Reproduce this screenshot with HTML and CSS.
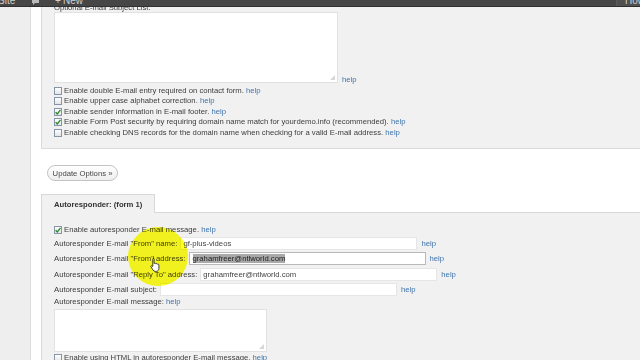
FILE: index.html
```html
<!DOCTYPE html>
<html>
<head>
<meta charset="utf-8">
<link rel="stylesheet" href="styles.css">
</head>
<body>
<div class="adminbar">
  <div class="ab-items">
    <span class="ab-item site">Site</span>
    <span class="ab-item ab-icon">
      <svg width="9" height="9" viewBox="0 0 9 9"><path d="M1 1h7v5H4L2 8V6H1z" fill="#bbb"/></svg>
    </span>
    <span class="ab-item plus">+</span>
    <span class="ab-item new">New</span>
    <span class="ab-spacer"></span>
    <span class="ab-item howdy">Howdy</span>
  </div>
</div>

<div class="layout">
  <div class="sidebar"></div>
  <div class="main">
    <div class="panel panel-top">
      <div class="label">Optional E-mail Subject List:</div>
      <div class="ta-row">
        <div class="textarea ta-big"><span class="grip"></span></div>
        <a class="help">help</a>
      </div>
      <div class="checks">
        <div class="check-row"><span class="cb"></span>Enable double E-mail entry required on contact form. <a class="help">help</a></div>
        <div class="check-row"><span class="cb"></span>Enable upper case alphabet correction. <a class="help">help</a></div>
        <div class="check-row"><span class="cb checked"><svg width="6" height="6" viewBox="0 0 6 6"><path d="M0.6 3.2L2.3 5 5.5 0.8" fill="none" stroke="#2a8a2a" stroke-width="1.3"/></svg></span>Enable sender information in E-mail footer. <a class="help">help</a></div>
        <div class="check-row"><span class="cb checked"><svg width="6" height="6" viewBox="0 0 6 6"><path d="M0.6 3.2L2.3 5 5.5 0.8" fill="none" stroke="#2a8a2a" stroke-width="1.3"/></svg></span>Enable Form Post security by requiring domain name match for yourdemo.info (recommended). <a class="help">help</a></div>
        <div class="check-row"><span class="cb"></span>Enable checking DNS records for the domain name when checking for a valid E-mail address. <a class="help">help</a></div>
      </div>
    </div>

    <div class="actions"><span class="btn">Update Options »</span></div>

    <div class="tabs"><div class="tab">Autoresponder: (form 1)</div></div>

    <div class="panel panel-bottom">
      <div class="check-row"><span class="cb checked"><svg width="6" height="6" viewBox="0 0 6 6"><path d="M0.6 3.2L2.3 5 5.5 0.8" fill="none" stroke="#2a8a2a" stroke-width="1.3"/></svg></span>Enable autoresponder E-mail message. <a class="help">help</a></div>
      <div class="field-row"><span class="flabel">Autoresponder E-mail "From" name:</span><span class="input">gf-plus-videos</span><a class="help">help</a></div>
      <div class="field-row"><span class="flabel">Autoresponder E-mail "From" address:</span><span class="input focused"><span class="sel">grahamfreer@ntlworld.com</span></span><a class="help">help</a></div>
      <div class="field-row"><span class="flabel">Autoresponder E-mail "Reply To" address:</span><span class="input">grahamfreer@ntlworld.com</span><a class="help">help</a></div>
      <div class="field-row"><span class="flabel">Autoresponder E-mail subject:</span><span class="input"></span><a class="help">help</a></div>
      <div class="msg-label">Autoresponder E-mail message: <a class="help">help</a></div>
      <div class="textarea ta-small"><span class="grip"></span></div>
      <div class="check-row last"><span class="cb"></span>Enable using HTML in autoresponder E-mail message. <a class="help">help</a></div>
    </div>
  </div>
</div>

<div class="spot"></div>
<svg class="cursor" width="11" height="15" viewBox="0 0 11 15">
  <path d="M3 1.2c.7 0 1.1.5 1.1 1.1v4.2c.3-.3 1.4-.4 1.7.3.4-.4 1.4-.3 1.6.4.5-.3 1.5 0 1.5.8v3.2c0 1.6-1 3.2-2.6 3.2H5.2c-1 0-1.6-.6-2.2-1.4L1 9.9c-.4-.6 0-1.4.8-1.2l1 .8V2.3c0-.6.4-1.1 1.2-1.1z" fill="#fff" stroke="#111" stroke-width="0.8"/>
</svg>
</body>
</html>
```

FILE: styles.css
```css
* { box-sizing: border-box; }
html, body { margin: 0; padding: 0; }
body {
  width: 640px;
  height: 360px;
  overflow: hidden;
  background: #fff;
  font-family: "Liberation Sans", Arial, sans-serif;
  font-size: 7.7px;
  color: #3c3c3c;
  position: relative;
}
.adminbar {
  position: fixed;
  top: 0; left: 0; right: 0;
  height: 7px;
  background: #464646;
  border-bottom: 1px solid #2f2f2f;
  overflow: hidden;
  z-index: 5;
}
.ab-items {
  display: flex;
  margin-top: -6px;
  height: 13px;
  align-items: center;
}
.ab-item {
  color: #cfcfcf;
  font-size: 10px;
  line-height: 13px;
}
.site { margin-left: -2px; width: 33px; }
.ab-icon { display: flex; align-items: flex-end; height: 13px; padding-bottom: 1px; width: 24px; }
.plus { width: 8px; }
.ab-spacer { flex: 1; }
.howdy { border-left: 1px solid #5a5a5a; background: #505050; padding-left: 8px; width: 24px; overflow: hidden; }

.layout { display: flex; min-height: 360px; }
.sidebar { width: 31px; background: #eeeeee; border-right: 1px solid #dcdcdc; flex: none; }
.main { flex: 1; padding-left: 10px; }

.panel {
  background: #f1f1f1;
  border-left: 1px solid #dadada;
  padding-left: 12px;
}
.panel-top {
  border-bottom: 1px solid #dadada;
  padding-top: 4px;
  padding-bottom: 10px;
}
.label { line-height: 8px; }
.ta-row { display: flex; align-items: flex-end; margin-top: 0; }
.textarea {
  background: #fff;
  border: 1px solid #e2e2e2;
  position: relative;
}
.ta-big { width: 284px; height: 71px; }
.ta-small { width: 213px; height: 43px; margin-top: 2px; }
.grip {
  position: absolute;
  right: 2px; bottom: 2px;
  width: 5px; height: 5px;
  background:
    radial-gradient(circle, #aaa 0.6px, transparent 0.8px) 0 0 / 2px 2px;
  clip-path: polygon(100% 0, 100% 100%, 0 100%);
}
.ta-row .help { margin-left: 4px; line-height: 10px; margin-bottom: -2px; }
.help { color: #3f74aa; text-decoration: none; }
.checks { margin-top: 2.5px; }
.check-row { display: flex; align-items: center; line-height: 10.5px; height: 10.5px; white-space: pre; }
.cb {
  width: 8px; height: 8px;
  border: 1px solid #8596a8;
  background: linear-gradient(#ffffff, #e4e4e4);
  margin-right: 2px;
  display: flex; align-items: center; justify-content: center;
  flex: none;
}
.actions { padding: 16px 0 0 6px; }
.btn {
  display: inline-flex;
  align-items: center;
  justify-content: center;
  width: 71px; height: 16px;
  border: 1px solid #c4c4c4;
  border-radius: 8px;
  background: linear-gradient(#ffffff, #eeeeee);
  color: #464646;
}
.tabs {
  margin-top: 13px;
  display: flex;
  border-bottom: 1px solid #d8d8d8;
}
.tab {
  width: 114px; height: 19px;
  border: 1px solid #d8d8d8;
  border-bottom: none;
  background: #f1f1f1;
  margin-bottom: -1px;
  font-weight: bold;
  color: #333;
  padding-left: 12px;
  line-height: 19px;
}
.panel-bottom { padding-top: 12px; min-height: 160px; }
.field-row { display: flex; align-items: center; height: 15.5px; white-space: pre; }
.flabel { margin-right: 3px; }
.input {
  width: 237px; height: 13px;
  background: #fff;
  border: 1px solid #e6e6e6;
  padding-left: 2px;
  line-height: 11px;
  margin-right: 4px;
  color: #444;
}
.input.focused { border-color: #b9b9b9; padding-left: 3px; }
.sel { background: #a9a9a9; color: #222; }
.msg-label { line-height: 10px; margin-top: -0.5px; }
.check-row.last { margin-top: 1px; }

.spot {
  position: absolute;
  left: 128px; top: 227px;
  width: 60px; height: 59px;
  border-radius: 50%;
  background: radial-gradient(circle, #ffff20 70%, #ffff60 88%, rgba(255,255,255,0) 100%);
  mix-blend-mode: multiply;
  pointer-events: none;
}
.cursor { position: absolute; left: 150px; top: 257px; }
```
